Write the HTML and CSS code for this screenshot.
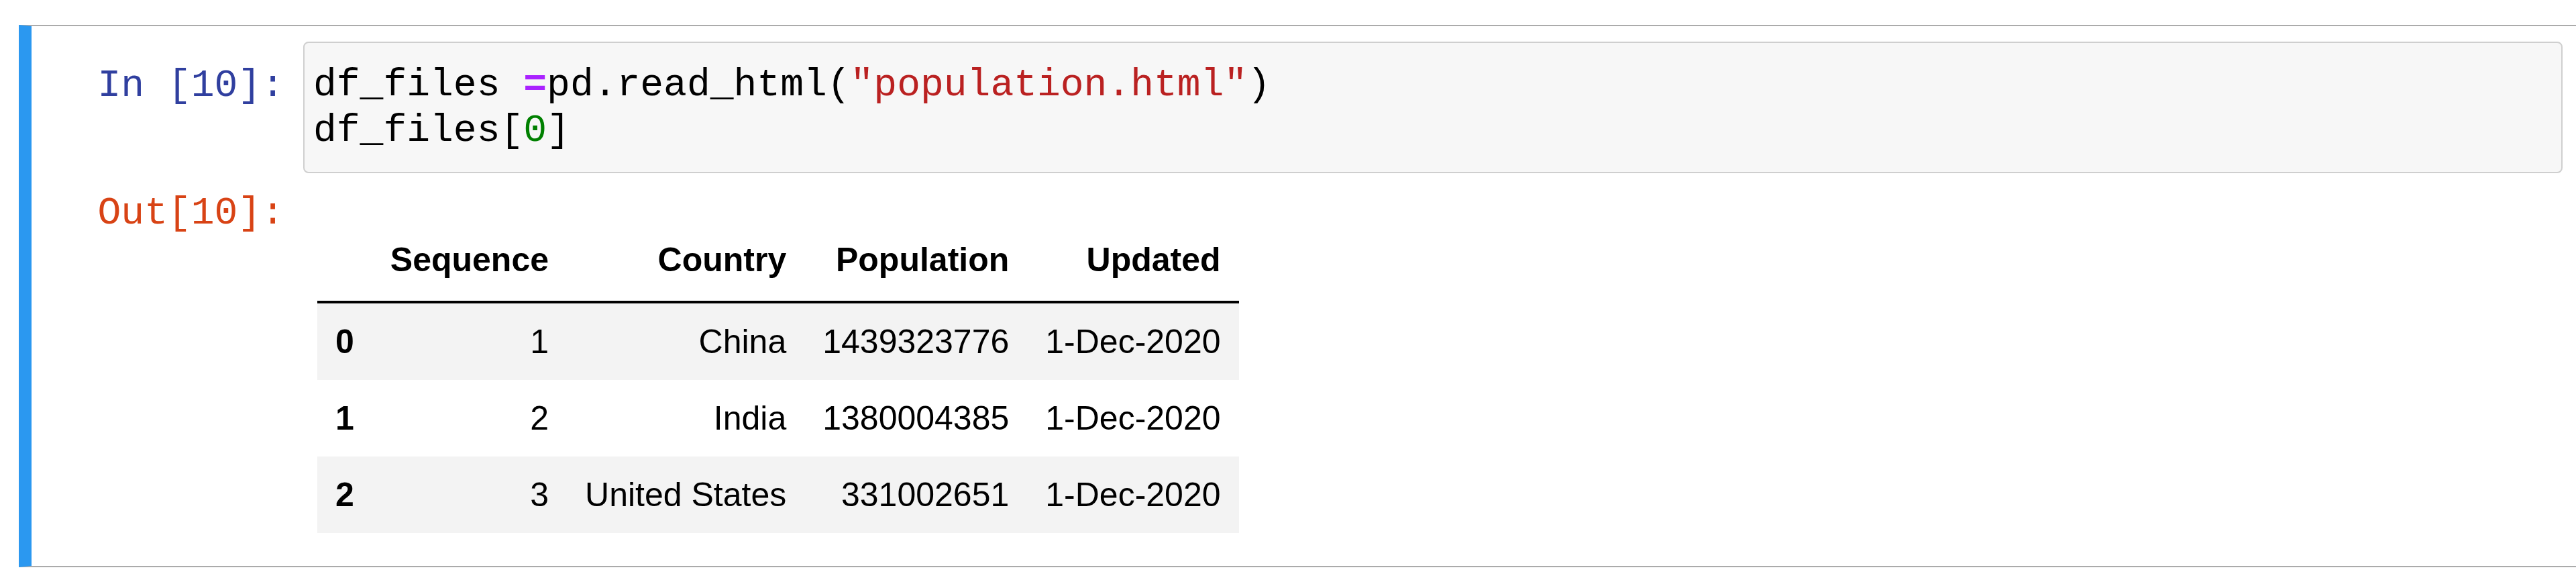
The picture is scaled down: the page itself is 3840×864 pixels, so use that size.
FILE: index.html
```html
<!DOCTYPE html>
<html lang="en">
<head>
<meta charset="utf-8">
<title>Notebook cell</title>
<link rel="stylesheet" href="styles.css">
</head>
<body>
<div class="cell">
  <div class="input-row">
    <div class="prompt in-prompt">In&nbsp;[10]:</div>
    <div class="code-box"><pre class="code">df_files <span class="op">=</span>pd.read_html(<span class="str">"population.html"</span>)
df_files[<span class="num">0</span>]</pre></div>
  </div>
  <div class="output-row">
    <div class="prompt out-prompt">Out[10]:</div>
    <div class="output">
      <table class="dataframe">
        <thead>
          <tr>
            <th class="idx"></th>
            <th>Sequence</th>
            <th>Country</th>
            <th>Population</th>
            <th>Updated</th>
          </tr>
        </thead>
        <tbody>
          <tr class="odd">
            <th class="idx">0</th>
            <td>1</td>
            <td>China</td>
            <td>1439323776</td>
            <td>1-Dec-2020</td>
          </tr>
          <tr>
            <th class="idx">1</th>
            <td>2</td>
            <td>India</td>
            <td>1380004385</td>
            <td>1-Dec-2020</td>
          </tr>
          <tr class="odd">
            <th class="idx">2</th>
            <td>3</td>
            <td>United States</td>
            <td>331002651</td>
            <td>1-Dec-2020</td>
          </tr>
        </tbody>
      </table>
    </div>
  </div>
</div>
</body>
</html>
```
FILE: styles.css
```css
html, body {
  margin: 0;
  padding: 0;
  background: #ffffff;
  overflow: hidden;
}

.cell {
  margin: 37px 0 0 28px;
  border-top: 2px solid #ababab;
  border-bottom: 2px solid #ababab;
  border-left: 19px solid #2b98f0;
  padding: 23px 20px 49px 0;
}

.input-row,
.output-row {
  display: flex;
  align-items: flex-start;
}

.output-row {
  margin-top: 26px;
}

.prompt {
  flex: 0 0 405px;
  box-sizing: border-box;
  padding-right: 28px;
  text-align: right;
  font-family: "Liberation Mono", "DejaVu Sans Mono", monospace;
  font-size: 58px;
  line-height: 68px;
  white-space: nowrap;
}

.in-prompt {
  color: #303f9f;
  padding-top: 32px;
}

.out-prompt {
  color: #d84315;
}

.code-box {
  flex: 1 1 auto;
  background: #f7f7f7;
  border: 2px solid #cfcfcf;
  border-radius: 8px;
  padding: 29px 13px 27px 13px;
}

.code {
  margin: 0;
  font-family: "Liberation Mono", "DejaVu Sans Mono", monospace;
  font-size: 58px;
  line-height: 68px;
  color: #000000;
}

.op {
  color: #aa22ff;
  font-weight: bold;
}

.str {
  color: #ba2121;
}

.num {
  color: #008000;
}

.output {
  flex: 1 1 auto;
  padding-left: 21px;
}

.dataframe {
  margin-top: 50px;
  border-collapse: separate;
  border-spacing: 0;
  font-family: "Liberation Sans", Arial, sans-serif;
  font-size: 50px;
  color: #000000;
}

.dataframe th,
.dataframe td {
  padding: 28px 27px;
  line-height: 58px;
  text-align: right;
  vertical-align: middle;
  white-space: nowrap;
}

.dataframe thead th {
  padding: 24px 27px 32px;
  border-bottom: 4px solid #000000;
  font-weight: bold;
}

.dataframe tbody th {
  font-weight: bold;
  text-align: left;
}

.dataframe tbody tr.odd {
  background: #f3f3f3;
}
```
